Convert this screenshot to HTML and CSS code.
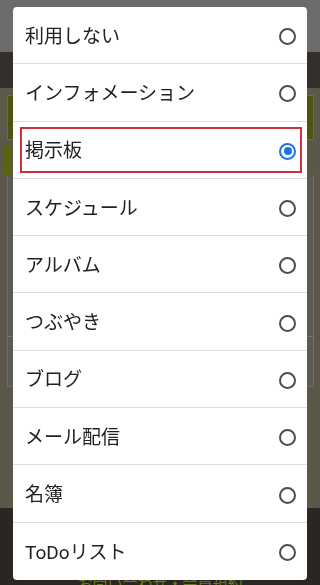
FILE: index.html
```html
<!DOCTYPE html>
<html lang="ja">
<head>
<meta charset="utf-8">
<title>機能選択</title>
<link rel="stylesheet" href="styles.css">
</head>
<body>
<div class="page">
  <div class="hdr"></div>
  <div class="nav"></div>
  <div class="main">
    <div class="banner"></div>
    <div class="tab"></div>
    <div class="card">
      <div class="card-top"></div>
      <div class="card-bottom"></div>
    </div>
  </div>
  <div class="ftr"><span class="ftr-link">お問い合わせ・会員規約</span></div>
</div>

<div class="dialog">
  <div class="item"><span class="label">利用しない</span><span class="radio"></span></div>
  <div class="item"><span class="label">インフォメーション</span><span class="radio"></span></div>
  <div class="item item-marked"><span class="label">掲示板</span><span class="radio radio-on"></span></div>
  <div class="item"><span class="label">スケジュール</span><span class="radio"></span></div>
  <div class="item"><span class="label">アルバム</span><span class="radio"></span></div>
  <div class="item"><span class="label">つぶやき</span><span class="radio"></span></div>
  <div class="item"><span class="label">ブログ</span><span class="radio"></span></div>
  <div class="item"><span class="label">メール配信</span><span class="radio"></span></div>
  <div class="item"><span class="label">名簿</span><span class="radio"></span></div>
  <div class="item"><span class="label">ToDoリスト</span><span class="radio"></span></div>
</div>
</body>
</html>
```

FILE: styles.css
```css
html, body {
  margin: 0;
  padding: 0;
}
body {
  width: 320px;
  height: 585px;
  overflow: hidden;
  font-family: Roboto, "Noto Sans CJK JP", sans-serif;
  background: #2a2624;
}

/* dimmed page behind the dialog */
.page {
  height: 585px;
  display: flex;
  flex-direction: column;
}
.hdr {
  height: 52px;
  background: #6c6c6c;
}
.nav {
  height: 36px;
  background: #332f2d;
}
.main {
  flex: 1;
  background: #5b584a;
  padding-top: 7px;
  display: flex;
  flex-direction: column;
}
.banner {
  height: 43px;
  margin: 0 6px 0 7px;
  border: 1px solid #6f7518;
  background: #4f5311;
}
.tab {
  width: 9px;
  height: 30px;
  margin: 5px 0 0 3px;
  background: #5c6212;
}
.card {
  height: 211px;
  margin: 0 6px 0 7px;
  border: 1px solid #707068;
  border-top: none;
  background: #5c5c57;
  display: flex;
  flex-direction: column;
}
.card-top {
  height: 161px;
  border-bottom: 1px solid #77776f;
}
.card-bottom {
  flex: 1;
}
.ftr {
  height: 77px;
  background: #2a2624;
  display: flex;
  justify-content: center;
  padding-top: 67px;
  box-sizing: border-box;
}
.ftr-link {
  color: #6c7a1c;
  font-size: 15px;
  line-height: 18px;
}

/* dialog */
.dialog {
  position: fixed;
  left: 13px;
  top: 7px;
  width: 294px;
  background: #ffffff;
  border-radius: 4px;
  overflow: hidden;
  display: flex;
  flex-direction: column;
}
.item {
  position: relative;
  height: 57.3px;
  box-sizing: border-box;
  display: flex;
  align-items: center;
  justify-content: space-between;
  padding: 3px 11px 0 12px;
  border-bottom: 1px solid #dedede;
}
.item:last-child {
  border-bottom: none;
}
.label {
  font-size: 19px;
  color: #212121;
  line-height: 24px;
}
.radio {
  width: 17px;
  height: 17px;
  box-sizing: border-box;
  border: 2px solid #4d4d4d;
  border-radius: 50%;
  display: flex;
  align-items: center;
  justify-content: center;
}
.radio-on {
  border-color: #1a73e8;
}
.radio-on::before {
  content: "";
  width: 8px;
  height: 8px;
  border-radius: 50%;
  background: #1a73e8;
}
.item-marked::after {
  content: "";
  position: absolute;
  left: 7px;
  right: 5px;
  top: 5px;
  bottom: 5px;
  border: 2px solid #c8333d;
  pointer-events: none;
}
```
